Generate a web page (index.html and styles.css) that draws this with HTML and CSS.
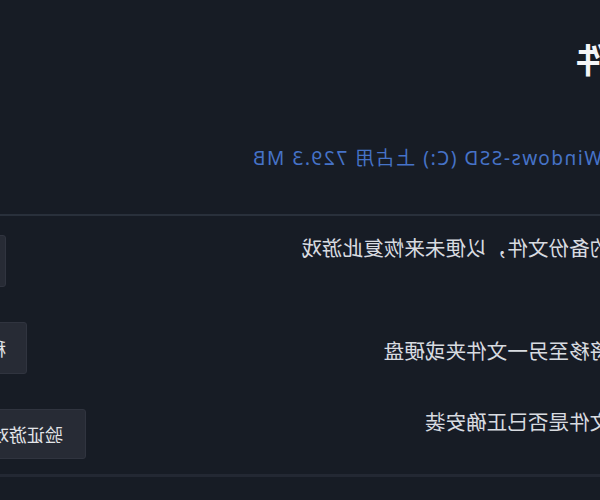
FILE: index.html
```html
<!DOCTYPE html>
<html lang="zh-CN">
<head>
<meta charset="utf-8">
<title>本地文件</title>
<link rel="stylesheet" href="styles.css">
</head>
<body>
<div class="mirror">
  <div class="panel">
    <h1 class="title">件</h1>
    <p class="usage">Windows-SSD (C:) 上占用 729.3 MB</p>
    <div class="divider"></div>
    <div class="row row-1">
      <span class="row-text">的备份文件，以便未来恢复此游戏</span>
      <button class="btn">备份游戏文件</button>
    </div>
    <div class="row row-2">
      <span class="row-text">将移至另一文件夹或硬盘</span>
      <button class="btn">移动安装文件夹</button>
    </div>
    <div class="row row-3">
      <span class="row-text">文件是否已正确安装</span>
      <button class="btn">验证游戏文件的完整性</button>
    </div>
    <div class="divider divider-bottom"></div>
  </div>
</div>
</body>
</html>
```

FILE: styles.css
```css
html, body {
  margin: 0;
  padding: 0;
}
body {
  width: 600px;
  height: 500px;
  overflow: hidden;
  background: #171c25;
  font-family: "Noto Sans", "Noto Sans CJK SC", sans-serif;
  color: #d6d9de;
}
.mirror {
  width: 600px;
  height: 500px;
  transform: scaleX(-1);
  overflow: hidden;
}
.panel {
  width: 751px;
  margin-left: -10px;
  display: flex;
  flex-direction: column;
}
.title {
  margin: 40px 0 0 0;
  font-size: 34px;
  line-height: 40px;
  font-weight: 700;
  color: #f4f5f7;
}
.usage {
  margin: 66px 0 0 8px;
  font-size: 19px;
  line-height: 24px;
  letter-spacing: 1.55px;
  color: #4673c8;
  white-space: nowrap;
}
.divider {
  margin-top: 44px;
  height: 2px;
  background: #29303b;
}
.row {
  display: flex;
  align-items: flex-start;
  height: 52px;
}
.row-text {
  margin-left: -0.3px;
  font-size: 20.6px;
  line-height: 24px;
  color: #d8dbe0;
  white-space: nowrap;
}
.btn {
  margin-left: auto;
  height: 52px;
  padding: 0 20px;
  border: 1px solid #30343f;
  border-radius: 3px;
  background: #272b35;
  color: #e2e4e8;
  font-family: "Noto Sans CJK SC", sans-serif;
  font-size: 18px;
  white-space: nowrap;
}
.row-1 { margin-top: 19px; }
.row-1 .row-text { margin-top: 1px; }
.row-1 .btn { padding-right: 17px; }
.row-2 { margin-top: 35px; }
.row-2 .row-text { margin-top: 17px; }
.row-3 { margin-top: 35px; height: 50px; }
.row-3 .btn { height: 50px; padding-left: 22px; padding-right: 23px; }
.row-3 .row-text { margin-top: 1px; }
.divider-bottom {
  margin-top: 15px;
  height: 3px;
  background: #232833;
}
```
